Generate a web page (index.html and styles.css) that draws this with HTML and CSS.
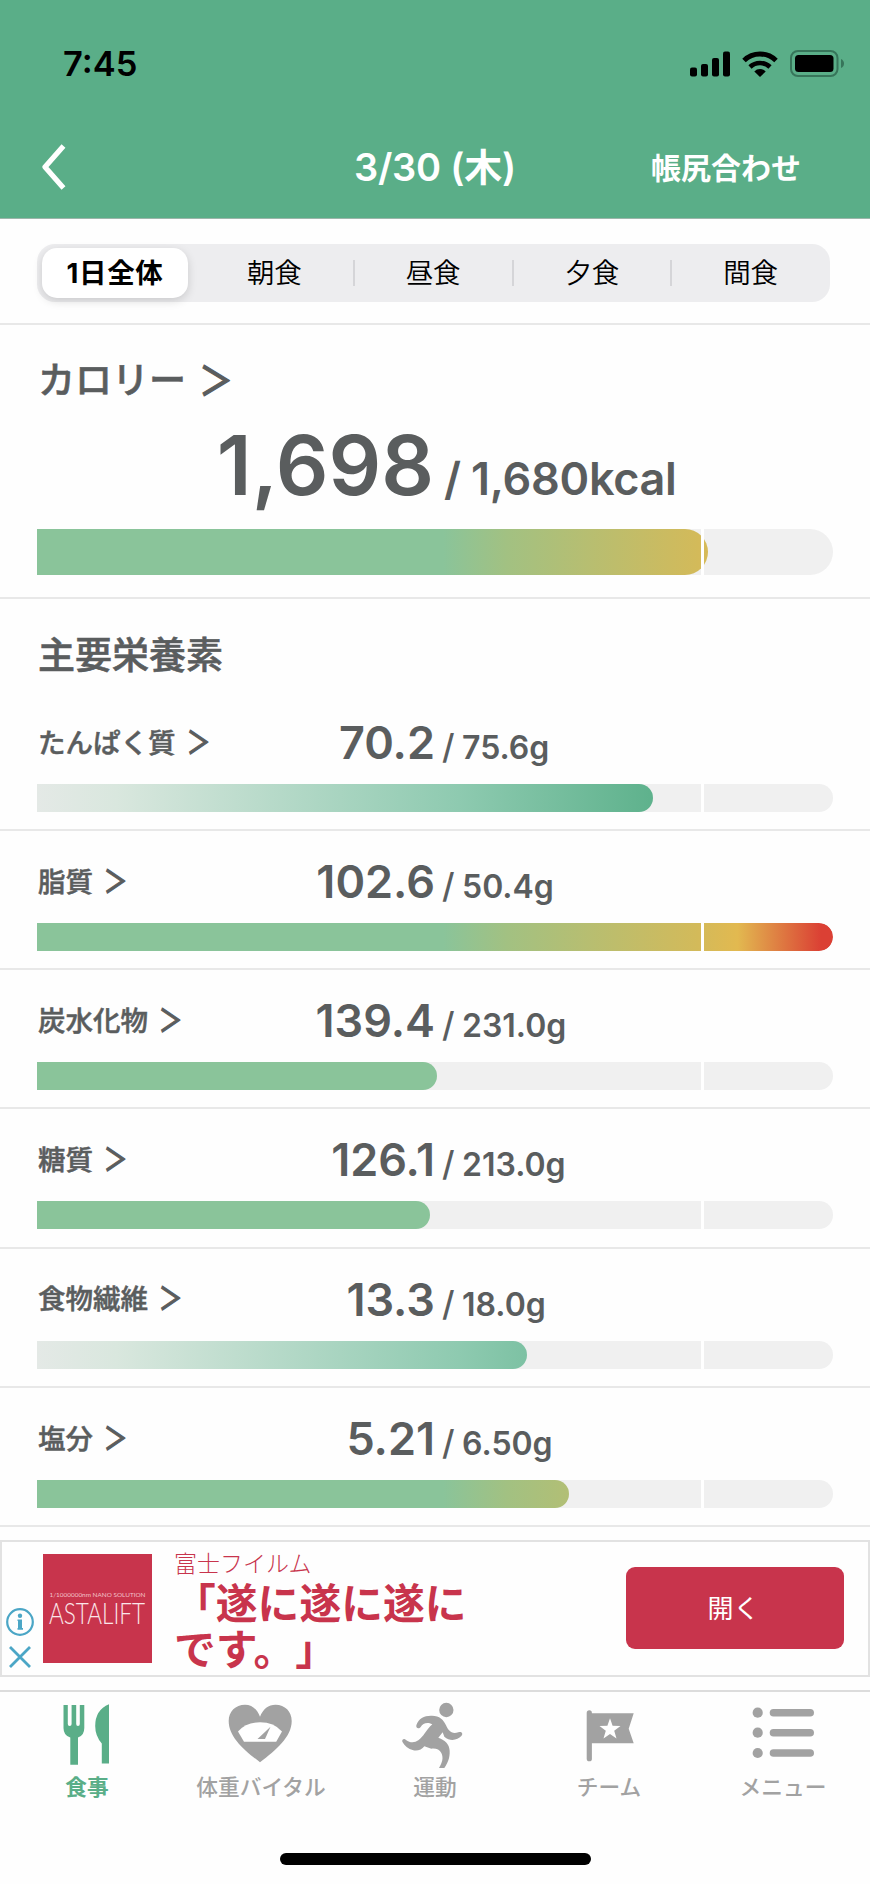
FILE: index.html
```
<!DOCTYPE html>
<html lang="ja">
<head>
  <meta charset="UTF-8">
  <title>3/30 (木)</title>
  <link rel="stylesheet" href="styles.css">
</head>
<body>

  <header class="header">
    <div class="status-bar">
      <span class="time">7:45</span>
      <div class="status-icons">
        <svg width="40" height="26" viewBox="0 0 40 26">
          <rect x="0" y="16.5" width="7" height="9" rx="2"/>
          <rect x="11" y="13" width="7" height="12.5" rx="2"/>
          <rect x="22" y="7" width="7" height="18.5" rx="2"/>
          <rect x="33" y="0.5" width="7" height="25" rx="2"/>
        </svg>
        <svg class="wifi" width="36" height="26" viewBox="0 0 36 26">
          <path d="M2 9.5 A23 23 0 0 1 34 9.5" fill="none" stroke="#000" stroke-width="5"/>
          <path d="M8 16 A14.5 14.5 0 0 1 28 16" fill="none" stroke="#000" stroke-width="4.6"/>
          <path d="M12.3 20.5 A8 8 0 0 1 23.7 20.5 L18 26 Z"/>
        </svg>
        <svg class="battery" width="54" height="27" viewBox="0 0 54 27">
          <rect x="1" y="1" width="46.5" height="25" rx="7" fill="none" stroke="#37755a" stroke-width="2"/>
          <rect x="5" y="5" width="38.5" height="17" rx="3.5"/>
          <path d="M51 9 Q54 10.5 54 13.5 Q54 16.5 51 18 Z" fill="#37755a"/>
        </svg>
      </div>
    </div>
    <div class="nav">
      <svg class="back" width="24" height="46" viewBox="0 0 24 46">
        <path d="M21.5 2 L3 23 L21.5 44" fill="none" stroke="#fff" stroke-width="5.2" stroke-linejoin="round"/>
      </svg>
      <h1>3/30 (木)</h1>
      <span class="nav-action">帳尻合わせ</span>
    </div>
  </header>

  <div class="tabs">
    <div class="segment">
      <div class="seg active">1日全体</div>
      <div class="seg">朝食</div>
      <div class="seg">昼食</div>
      <div class="seg">夕食</div>
      <div class="seg">間食</div>
    </div>
  </div>

  <section class="calorie">
    <h2>カロリー<span class="arrow">＞</span></h2>
    <div class="amount big">
      <div class="left"><span class="now">1,698</span></div>
      <span class="slash">/</span>
      <span class="goal">1,680kcal</span>
    </div>
    <div class="bar thick"><div class="fill limit" style="width: 84.3%"></div></div>
  </section>

  <section class="nutrients">
    <h2>主要栄養素</h2>

    <div class="row">
      <div class="amount">
        <div class="left"><span class="name">たんぱく質<span class="arrow">＞</span></span><span class="now">70.2</span></div>
        <span class="slash">/</span>
        <span class="goal">75.6g</span>
      </div>
      <div class="bar"><div class="fill gain" style="width: 77.4%"></div></div>
    </div>

    <div class="row">
      <div class="amount">
        <div class="left"><span class="name">脂質<span class="arrow">＞</span></span><span class="now">102.6</span></div>
        <span class="slash">/</span>
        <span class="goal">50.4g</span>
      </div>
      <div class="bar"><div class="fill limit" style="width: 100%"></div></div>
    </div>

    <div class="row">
      <div class="amount">
        <div class="left"><span class="name">炭水化物<span class="arrow">＞</span></span><span class="now">139.4</span></div>
        <span class="slash">/</span>
        <span class="goal">231.0g</span>
      </div>
      <div class="bar"><div class="fill limit" style="width: 50.3%"></div></div>
    </div>

    <div class="row">
      <div class="amount">
        <div class="left"><span class="name">糖質<span class="arrow">＞</span></span><span class="now">126.1</span></div>
        <span class="slash">/</span>
        <span class="goal">213.0g</span>
      </div>
      <div class="bar"><div class="fill limit" style="width: 49.4%"></div></div>
    </div>

    <div class="row">
      <div class="amount">
        <div class="left"><span class="name">食物繊維<span class="arrow">＞</span></span><span class="now">13.3</span></div>
        <span class="slash">/</span>
        <span class="goal">18.0g</span>
      </div>
      <div class="bar"><div class="fill gain" style="width: 61.6%"></div></div>
    </div>

    <div class="row">
      <div class="amount">
        <div class="left"><span class="name">塩分<span class="arrow">＞</span></span><span class="now">5.21</span></div>
        <span class="slash">/</span>
        <span class="goal">6.50g</span>
      </div>
      <div class="bar"><div class="fill limit" style="width: 66.8%"></div></div>
    </div>
  </section>

  <div class="ad">
    <div class="ad-marks">
      <svg width="28" height="28" viewBox="0 0 28 28">
        <circle cx="14" cy="14" r="12.8" fill="none" stroke="#4ba6c6" stroke-width="2.2"/>
        <circle cx="14" cy="7.8" r="2.2" fill="#4ba6c6"/>
        <path d="M11.5 11.5 H16 V20 H17 V21.8 H11.5 V20 H12 V13 H11.5 Z" fill="#4ba6c6"/>
      </svg>
      <svg width="22" height="22" viewBox="0 0 22 22">
        <path d="M1 1 L21 21 M21 1 L1 21" stroke="#4ba6c6" stroke-width="2.8"/>
      </svg>
    </div>
    <svg class="ad-logo" width="109" height="109" viewBox="0 0 109 109">
      <rect width="109" height="109" fill="#c8344c"/>
      <text class="logo-sub" x="6.5" y="43" textLength="96" lengthAdjust="spacingAndGlyphs">1/1000000nm NANO SOLUTION</text>
      <text class="logo-main" x="6" y="70" textLength="96" lengthAdjust="spacingAndGlyphs">ASTALIFT</text>
    </svg>
    <div class="ad-text">
      <div class="ad-brand">富士フイルム</div>
      <div class="ad-copy">「遂に遂に遂に<br>です。」</div>
    </div>
    <button class="ad-button">開く</button>
  </div>

  <nav class="tab-bar">
    <div class="tab active">
      <svg width="90" height="80" viewBox="0 0 90 80">
        <path d="M21.5 12 H25.8 V31 Q25.8 33 27.7 33 Q29.6 33 29.6 31 V12 H34.2 V31 Q34.2 33 36 33 Q37.8 33 37.8 31 V12 H42.3 V35 Q42.3 42.5 36 44.5 V71.7 H28.3 V44.5 Q21.5 42.5 21.5 35 Z"/>
        <path d="M67 11.3 V70.5 H59.8 V50.5 Q53.2 43 53.2 33 Q53.2 17 67 11.3 Z"/>
      </svg>
      <span>食事</span>
    </div>
    <div class="tab">
      <svg width="90" height="80" viewBox="0 0 90 80">
        <path d="M44 23.7 C41 16 36 11.7 29 11.7 C19.5 11.7 12.7 18.5 12.7 28 C12.7 44 28 57 44 69.3 C60 57 75.7 44 75.7 28 C75.7 18.5 69 11.7 59.5 11.7 C52.5 11.7 47 16 44 23.7 Z"/>
        <path class="cut" d="M22 38.5 Q30 29.3 44 29.3 Q58 29.3 66 38.5 L60.2 48.7 H28 Z"/>
        <path d="M54.5 33.8 L49 46 H41.5 Z"/>
      </svg>
      <span>体重バイタル</span>
    </div>
    <div class="tab">
      <svg width="90" height="80" viewBox="0 9 270 240">
        <circle cx="169" cy="60" r="21.5"/>
        <path d="M79 106 C86 84 104 76 126 77 C149 78 160 88 168 106 C175 121 184 134 205 127 C214 123 221 131 214 138 C203 150 181 156 163 140 L158 127 L145 143 C166 151 178 162 179 182 C180 204 173 219 163 234 H147 C157 217 161 204 154 189 C149 178 136 174 124 176 L103 169 C96 179 82 184 70 181 C54 177 43 167 37 155 C35 148 43 144 48 150 C60 159 74 159 85 151 C100 141 109 119 127 103 C110 95 99 101 92 111 C88 117 77 116 79 106 Z"/>
      </svg>
      <span>運動</span>
    </div>
    <div class="tab">
      <svg width="90" height="80" viewBox="0 0 90 80">
        <rect x="22.7" y="17.3" width="5.2" height="51" rx="2.6"/>
        <path d="M27 20.3 H69.7 L64.7 35.7 L69.7 50.3 H27 Z"/>
        <path class="cut" d="M46 25.3 L48.6 32.8 L56.5 33 L50.2 37.8 L52.5 45.4 L46 40.9 L39.5 45.4 L41.8 37.8 L35.5 33 L43.4 32.8 Z"/>
      </svg>
      <span>チーム</span>
    </div>
    <div class="tab">
      <svg width="90" height="80" viewBox="0 0 90 80">
        <circle cx="19.7" cy="19.7" r="5.1"/>
        <circle cx="19.7" cy="39.7" r="5.1"/>
        <circle cx="19.7" cy="60" r="5.1"/>
        <rect x="31.7" y="15.9" width="44.3" height="7.6" rx="3.8"/>
        <rect x="31.7" y="35.9" width="44.3" height="7.6" rx="3.8"/>
        <rect x="31.7" y="56.2" width="44.3" height="7.6" rx="3.8"/>
      </svg>
      <span>メニュー</span>
    </div>
  </nav>
  <div class="home-indicator"></div>

</body>
</html>
```
FILE: styles.css
```
* { box-sizing: border-box; }
body {
  margin: 0; width: 870px; height: 1884px; overflow: hidden;
  font-family: Inter, "Noto Sans CJK JP", sans-serif;
  background-color: #fefefe; color: #5a5d5e;
}
h1, h2 { margin: 0; font-weight: 500; }
svg { display: block; flex: none; }

/* header */
.header {
  height: 219px; background-color: #5aae88; border-bottom: 1px solid #9db5aa;
}
.status-bar {
  height: 127px; padding: 0 26px 0 63px;
  display: flex; justify-content: space-between; align-items: center;
}
.time { font-size: 34.5px; font-weight: 600; color: #000; }
.status-icons { display: flex; align-items: center; }
.wifi { margin-left: 12px; }
.battery { margin-left: 12px; }
.nav {
  height: 80px; padding: 0 69px 0 42px; color: #fff;
  display: grid; grid-template-columns: 260px 266px 1fr; align-items: center;
}
.nav h1 {
  font-size: 38px; font-weight: 600; letter-spacing: -0.2px;
  text-align: center; white-space: nowrap; padding-bottom: 5px;
}
.nav-action { font-size: 30px; font-weight: 700; text-align: right; padding-bottom: 3px; }

/* meal switch */
.tabs {
  height: 106px; padding: 25px 40px 0 37px; border-bottom: 2px solid #e8e8e8;
}
.segment {
  height: 58px; padding: 4px 0 4px 5px; border-radius: 18px;
  background-color: #ededef; display: flex; color: #000;
}
.seg {
  flex: 1; display: flex; align-items: center; justify-content: center;
  font-size: 27.5px; font-weight: 350; position: relative; padding-bottom: 5px;
}
.seg.active {
  flex: none; width: 146px; margin-right: 7px; background-color: #fff; border-radius: 15px;
  font-weight: 700; letter-spacing: 0.7px; box-shadow: 0 3px 10px rgba(0, 0, 0, 0.15);
}
.seg + .seg + .seg::before {
  content: ""; position: absolute; left: -1px; top: 12px;
  width: 2px; height: 26px; background-color: #d5d5d8;
}

/* amounts */
.amount { display: flex; align-items: baseline; line-height: 1; white-space: nowrap; }
.left { width: 398px; display: flex; align-items: center; }
.name {
  display: flex; align-items: center; padding: 2px 0 0 1px; font-size: 27.5px; font-weight: 500;
  -webkit-text-stroke: 0.5px #5a5d5e;
}
.arrow {
  margin-left: 0.27em; transform: scale(0.86, 1.14); transform-origin: right center;
  -webkit-text-stroke: 1px #5a5d5e;
}
.now { align-self: baseline; margin-left: auto; font-size: 45px; font-weight: 600; }
.slash { width: 27px; padding-left: 7px; font-size: 34px; font-weight: 500; }
.goal { font-size: 32px; font-weight: 600; }
.amount.big .left { width: 397px; }
.amount.big .now { font-size: 82.5px; }
.amount.big .slash { width: 37px; padding-left: 10px; font-size: 45px; font-weight: 600; }
.amount.big .goal { font-size: 45px; font-weight: 600; letter-spacing: -0.3px; }

/* bars, the white tick marks the daily goal */
.bar {
  height: 28px; background-color: #f0f0f0; border-radius: 0 14px 14px 0;
  position: relative; overflow: hidden;
}
.bar::after {
  content: ""; position: absolute; left: 664px; top: 0;
  width: 3px; height: 100%; background-color: #fff;
}
.fill {
  height: 100%; border-radius: 0 14px 14px 0;
  background-size: 796px 100%; background-repeat: no-repeat;
}
.fill.limit {
  background-image: linear-gradient(90deg, #8ac49a 51%, #a2c182 59%, #d3ba5a 83%, #e2b950 88%, #db4034 98.5%);
}
.fill.gain {
  background-image: linear-gradient(90deg, #e4e9e6, #d9e7de 10%, #8ecab0 53%, #5fb28d 77%);
}
.bar.thick { height: 46px; border-radius: 0 23px 23px 0; }
.bar.thick .fill { border-radius: 0 23px 23px 0; }

/* sections */
.calorie {
  height: 274px; padding: 30px 37px 0; border-bottom: 2px solid #e8e8e8;
}
h2 {
  height: 52px; font-size: 37px; line-height: 52px;
  -webkit-text-stroke: 0.6px #5a5d5e; display: flex; align-items: center;
}
h2 .arrow { transform: scale(0.92, 1.08); }
.calorie h2 { padding-left: 1px; }
.calorie .amount { height: 81px; margin: 17px 0 24px; }
.nutrients { padding-top: 31px; }
.nutrients h2 { padding-left: 38px; }
.row {
  height: 139.2px; padding: 28px 37px 0; border-bottom: 2px solid #e8e8e8;
}
.row:first-of-type { height: 149px; padding-top: 38px; }
.row .amount { height: 45px; margin-bottom: 19px; }

/* ad */
.ad {
  height: 137px; margin-top: 13px; padding: 0 24px 0 4px; border: 2px solid #e2e2e2;
  display: flex;
}
.ad-marks {
  width: 37px; padding: 66px 9px 0 0; display: flex; flex-direction: column;
  align-items: center; gap: 10px;
}
.ad-logo { margin-top: 12px; overflow: visible; }
.logo-sub { font-family: Lato, sans-serif; font-size: 5.5px; fill: #f3c3ca; }
.logo-main { font-family: Lato, sans-serif; font-size: 29px; font-weight: 300; fill: #fbe6e9; }
.ad-text { margin-left: 22px; padding-top: 9px; flex: 1; color: #c8344c; }
.ad-brand { font-size: 23px; font-weight: 300; line-height: 26px; }
.ad-copy {
  font-size: 41.8px; font-weight: 700; line-height: 46px; margin-top: 4px;
  text-spacing-trim: space-all;
}
.ad-button {
  width: 218px; height: 82px; margin-top: 25px; border: none; border-radius: 9px;
  background-color: #c8344c; color: #fff; font-family: inherit; font-size: 26px; padding: 0 3px 2px 0;
}

/* bottom tab bar */
.tab-bar {
  height: 160px; margin-top: 13px; padding-top: 1px; border-top: 2px solid #dcdcdc; display: flex;
}
.tab {
  flex: 1; display: flex; flex-direction: column; align-items: center;
  color: #a2a2a2; fill: #a2a2a2; font-size: 21.7px; font-weight: 500; line-height: 28px;
}
.tab.active { color: #5aae88; fill: #5aae88; font-weight: 700; }
.tab .cut { fill: #fff; }
.home-indicator {
  width: 311px; height: 12px; margin: 3px auto 0; border-radius: 6px; background-color: #000;
}
```
